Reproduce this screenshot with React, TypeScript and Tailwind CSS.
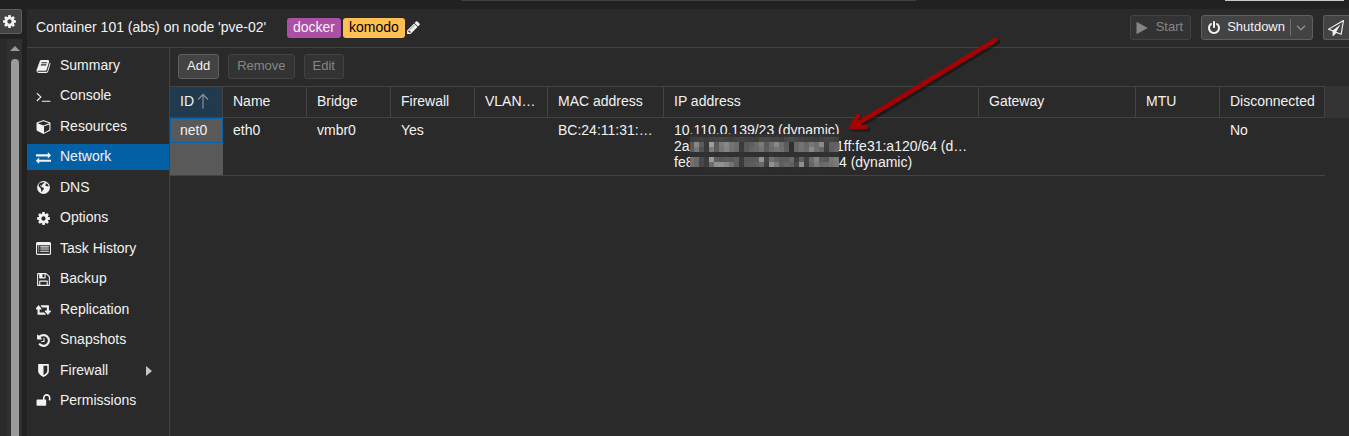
import type { ReactNode } from "react";

type IconName = keyof typeof PATHS;

// FontAwesome 4 outlines on the 1792 unit grid
const PATHS = {
  book: "M1703 478q40 57 18 129l-275 906q-19 64-76.5 107.5t-122.5 43.5h-923q-77 0-148.5-53.5t-99.5-131.5q-24-67-2-127 0-4 3-27t4-37q1-8-3-21.5t-3-19.5q2-11 8-21t16.5-23.5 16.5-23.5q23-38 45-91.5t30-91.5q3-10 .5-30t-.5-28q3-11 17-28t17-23q21-36 42-92t25-90q1-9-2.5-32t.5-28q4-13 22-30.5t22-22.5q19-26 42.5-84.5t27.5-96.5q1-8-3-25.5t-2-26.5q2-8 9-18t18-23 17-21q8-12 16.5-30.5t15-35 16-36 19.5-32 26.5-23.5 36-11.5 47.5 5.5l-1 3q38-9 51-9h761q74 0 114 56t18 130l-274 906q-36 119-71.5 153.5t-128.5 34.5h-869q-27 0-38 15-11 16-1 43 24 70 144 70h923q29 0 56-15.5t35-41.5l300-987q7-22 5-57 38 15 59 43zm-1064 2q-4 13 2 22.5t20 9.5h608q13 0 25.5-9.5t16.5-22.5l21-64q4-13-2-22.5t-20-9.5h-608q-13 0-25.5 9.5t-16.5 22.5zm-83 256q-4 13 2 22.5t20 9.5h608q13 0 25.5-9.5t16.5-22.5l21-64q4-13-2-22.5t-20-9.5h-608q-13 0-25.5 9.5t-16.5 22.5z",
  terminal: "M649 983l-466 466q-10 10-23 10t-23-10l-50-50q-10-10-10-23t10-23l393-393-393-393q-10-10-10-23t10-23l50-50q10-10 23-10t23 10l466 466q10 10 10 23t-10 23zm1079 457v64q0 14-9 23t-23 9h-960q-14 0-23-9t-9-23v-64q0-14 9-23t23-9h960q14 0 23 9t9 23z",
  cube: "M896 1629l640-349v-636l-640 233v752zm-64-865l698-254-698-254-698 254zm832-252v768q0 35-18 65t-49 47l-704 384q-28 16-61 16t-61-16l-704-384q-31-17-49-47t-18-65v-768q0-40 23-73t61-47l704-256q22-8 44-8t44 8l704 256q38 14 61 47t23 73z",
  exchange: "M1792 1184v192q0 13-9.5 22.5t-22.5 9.5h-1376v192q0 13-9.5 22.5t-22.5 9.5q-12 0-24-10l-319-320q-9-9-9-22 0-14 9-23l320-320q9-9 23-9 13 0 22.5 9.5t9.5 22.5v192h1376q13 0 22.5 9.5t9.5 22.5zm0-544q0 14-9 23l-320 320q-9 9-23 9-13 0-22.5-9.5t-9.5-22.5v-192h-1376q-13 0-22.5-9.5t-9.5-22.5v-192q0-13 9.5-22.5t22.5-9.5h1376v-192q0-14 9-23t23-9q12 0 24 10l319 319q9 9 9 23z",
  globe: "M896 128a768 768 0 1 0 0 1536a768 768 0 1 0 0-1536zM760 290l150-40 110 60-60 90-130 40-40 90-90 20 60 110-70 30-110-60-90 30 40 100 110 10 40 90 150 30 130 110-60 140-110 80-30 160-90 40-60-200-20-180-130-130-130-170-20-160 90-150 120-100zM1180 400l170 50 110 160 40 170-80 40-60-90-130 20-110-80 30-120z",
  cog: "M1152 896q0-106-75-181t-181-75-181 75-75 181 75 181 181 75 181-75 75-181zm512-109v222q0 12-8 23t-20 13l-185 28q-19 54-39 91 35 50 107 138 10 12 10 25t-9 23q-27 37-99 108t-94 71q-12 0-26-9l-138-108q-44 23-91 38-16 136-29 186-7 28-36 28h-222q-14 0-24.5-8.5t-11.5-21.5l-28-184q-49-16-90-37l-141 107q-10 9-25 9-14 0-25-11-126-114-165-168-7-10-7-23 0-12 8-23 15-21 51-66.5t54-70.5q-27-50-41-99l-183-27q-13-2-21-12.5t-8-23.5v-222q0-12 8-23t19-13l186-28q14-46 39-92-40-57-107-138-10-12-10-24 0-10 9-23 26-36 98.5-107.5t94.5-71.5q13 0 26 10l138 107q44-23 91-38 16-136 29-186 7-28 36-28h222q14 0 24.5 8.5t11.5 21.5l28 184q49 16 90 37l142-107q9-9 24-9 13 0 25 10 129 119 165 170 7 8 7 22 0 12-8 23-15 21-51 66.5t-54 70.5q26 50 41 98l183 28q13 2 21 12.5t8 23.5z",
  list: "M160 128h1472q66 0 113 47t47 113v1216q0 66-47 113t-113 47h-1472q-66 0-113-47t-47-113v-1216q0-66 47-113t113-47zM128 512v992q0 32 32 32h1472q32 0 32-32v-992zM256 640h128v128h-128zM256 896h128v128h-128zM256 1152h128v128h-128zM512 640h1024v128h-1024zM512 896h1024v128h-1024zM512 1152h1024v128h-1024z",
  save: "M512 1536h768v-384h-768v384zm896 0h128v-896q0-14-10-38.5t-20-34.5l-281-281q-10-10-34-20t-39-10v416q0 40-28 68t-68 28h-576q-40 0-68-28t-28-68v-416h-128v1280h128v-416q0-40 28-68t68-28h832q40 0 68 28t28 68v416zm-384-928v-320q0-13-9.5-22.5t-22.5-9.5h-192q-13 0-22.5 9.5t-9.5 22.5v320q0 13 9.5 22.5t22.5 9.5h192q13 0 22.5-9.5t9.5-22.5zm640 32v928q0 40-28 68t-68 28h-1344q-40 0-68-28t-28-68v-1344q0-40 28-68t68-28h928q40 0 88 20t76 48l280 280q28 28 48 76t20 88z",
  retweet: "M1216 1568q0 13-9.5 22.5t-22.5 9.5h-960q-8 0-13.5-2t-9-7-5.5-8-3-11.5-1-11.5v-600h-192q-26 0-45-19t-19-45q0-24 15-41l320-384q19-22 49-22t49 22l320 384q15 17 15 41 0 26-19 45t-45 19h-192v384h576q16 0 25 11l160 192q7 10 7 21zm640-416q0 24-15 41l-320 384q-20 23-49 23t-49-23l-320-384q-15-17-15-41 0-26 19-45t45-19h192v-384h-576q-16 0-25-12l-160-192q-7-9-7-20 0-13 9.5-22.5t22.5-9.5h960q8 0 13.5 2t9 7 5.5 8 3 11.5 1 11.5v600h192q26 0 45 19t19 45z",
  history: "M1664 896q0 156-61 298t-164 245-245 164-298 61q-172 0-327-72.5t-264-204.5q-7-10-6.5-22.5t8.5-20.5l137-138q10-9 25-9 16 2 23 12 73 95 179 147t225 52q104 0 198.5-40.5t163.5-109.5 109.5-163.5 40.5-198.5-40.5-198.5-109.5-163.5-163.5-109.5-198.5-40.5q-98 0-188 35.5t-160 101.5l137 138q31 30 14 69-17 40-59 40h-448q-26 0-45-19t-19-45v-448q0-42 40-59 39-17 69 14l130 129q107-101 244.5-156.5t284.5-55.5q156 0 298 61t245 164 164 245 61 298zm-640-288v448q0 14-9 23t-23 9h-320q-14 0-23-9t-9-23v-64q0-14 9-23t23-9h224v-352q0-14 9-23t23-9h64q14 0 23 9t9 23z",
  shield: "M1344 960v-640h-448v1137q119-63 213-137 235-184 235-360zm192-768v768q0 86-33.5 170.5t-83 150-118 127.5-126.5 103-121 77.5-89.5 49.5-42.5 20q-12 6-26 6t-26-6q-16-7-42.5-20t-89.5-49.5-121-77.5-126.5-103-118-127.5-83-150-33.5-170.5v-768q0-26 19-45t45-19h1152q26 0 45 19t19 45z",
  unlock: "M1728 576v256q0 26-19 45t-45 19h-64q-26 0-45-19t-19-45v-256q0-106-75-181t-181-75-181 75-75 181v192h96q40 0 68 28t28 68v576q0 40-28 68t-68 28h-960q-40 0-68-28t-28-68v-576q0-40 28-68t68-28h672v-192q0-185 131.5-316.5t316.5-131.5 316.5 131.5 131.5 316.5z",
  pencil: "M491 1536l91-91-235-235-91 91v107h128v128h107zm523-928q0-22-22-22-10 0-17 7l-542 542q-7 7-7 17 0 22 22 22 10 0 17-7l542-542q7-7 7-17zm-54-192l416 416-832 832h-416v-416zm683 96q0 53-37 90l-166 166-416-416 166-165q36-38 90-38 53 0 91 38l235 234q37 39 37 91z",
  play: "M1576 927l-1328 738q-23 13-39.5 3t-16.5-36v-1472q0-26 16.5-36t39.5 3l1328 738q23 13 23 31t-23 31z",
  power: "M1664 896q0 156-61 298t-164 245-245 164-298 61-298-61-245-164-164-245-61-298q0-182 80.5-343t226.5-270q43-32 95.5-25t83.5 50q32 42 24.5 94.5t-49.5 84.5q-98 74-151.5 181t-53.5 228q0 104 40.5 198.5t109.5 163.5 163.5 109.5 198.5 40.5 198.5-40.5 163.5-109.5 109.5-163.5 40.5-198.5q0-121-53.5-228t-151.5-181q-42-32-49.5-84.5t24.5-94.5q31-43 84-50t95 25q146 109 226.5 270t80.5 343zm-640-768v640q0 52-38 90t-90 38-90-38-38-90v-640q0-52 38-90t90-38 90 38 38 90z",
  plane: "M1764 11q33 24 27 64l-256 1536q-5 29-32 45-14 8-31 8-11 0-24-5l-527-215-298 327q-18 21-47 21-14 0-23-4-19-7-30-23.5t-11-36.5v-452l-472-193q-37-14-40-55-3-39 32-59l1664-960q35-21 68 2zm-342 1499l221-1323-1434 827 336 137 863-639-478 797z",
};

function Icon({ name, className = "size-[15px]" }: { name: IconName; className?: string }) {
  const box = name === "cube" ? "-64 0 1792 1792" : name === "retweet" ? "0 64 1856 1792" : "0 0 1792 1792";
  return (
    <svg viewBox={box} className={`shrink-0 ${className}`} fill="currentColor" fillRule={name === "list" || name === "globe" ? "evenodd" : "nonzero"} aria-hidden="true">
      <path d={PATHS[name]} />
    </svg>
  );
}

const NAV: { label: string; icon: IconName }[] = [
  { label: "Summary", icon: "book" },
  { label: "Console", icon: "terminal" },
  { label: "Resources", icon: "cube" },
  { label: "Network", icon: "exchange" },
  { label: "DNS", icon: "globe" },
  { label: "Options", icon: "cog" },
  { label: "Task History", icon: "list" },
  { label: "Backup", icon: "save" },
  { label: "Replication", icon: "retweet" },
  { label: "Snapshots", icon: "history" },
  { label: "Firewall", icon: "shield" },
  { label: "Permissions", icon: "unlock" },
];

const COLUMNS = [
  { label: "Name", width: "w-[84px]" },
  { label: "Bridge", width: "w-[84px]" },
  { label: "Firewall", width: "w-[84px]" },
  { label: "VLAN…", width: "w-[73px]" },
  { label: "MAC address", width: "w-[116px]" },
  { label: "IP address", width: "w-[315px]" },
  { label: "Gateway", width: "w-[157px]" },
  { label: "MTU", width: "w-[84px]" },
  { label: "Disconnected", width: "w-[105px]" },
];

// grey level of each block, one byte per block
const MOSAIC = [
  { y: 0, h: 3, row: "2f2f303032313232323131302f303134333231343534333230323433323130" },
  { y: 3, h: 5, row: "3b3f403c4244464240444441403c484a464440484c484440403c424644403c" },
  { y: 8, h: 5, row: "58885c3a9c5a7a88746e3a585e6a7c5a70886c5c30667466786e8a40606060" },
  { y: 13, h: 5, row: "5a76523a7c5c7684726a3c5a6468745c6c74705e3068726a8a70663e5e666a" },
  { y: 18, h: 5, row: "302f3032302f303130303230302f3030323030302f30303230303030302f30" },
  { y: 23, h: 5, row: "726a483a9a5e585c5a603c58585c944670645c5e6a3e60406c845c58767c80" },
  { y: 28, h: 5, row: "7068463c6c909288745e3a5a5c606a40907a5e6660488e3e667a6a6c72787c" },
  { y: 33, h: 6, row: "2b2c2b2c2d2c2d2c2c2b2c2c2b2c2d2c2b2c2c2b2c2d2c2b2c2b2c2b2c2b2b" },
];

function Mosaic() {
  return (
    <svg className="absolute left-4 top-3 h-[39px] w-[149px]" viewBox="0 0 149 39" shapeRendering="crispEdges" aria-hidden="true">
      {MOSAIC.map(({ y, h, row }) =>
        (row.match(/../g) ?? []).map((v, i) => (
          <rect key={`${y}-${i}`} x={i * 5 - 1} y={y} width={5} height={h} fill={`#${v}${v}${v}`} />
        )),
      )}
    </svg>
  );
}

function ToolButton({ children, disabled }: { children: ReactNode; disabled?: boolean }) {
  return (
    <button
      type="button"
      disabled={disabled}
      className="flex h-[25px] items-center rounded-[3px] border border-[#5f5f5f] bg-[#434343] px-2 pb-px text-[13px] leading-4 text-[#f2f2f2] disabled:border-[#434343] disabled:bg-[#333333] disabled:text-[#868686]"
    >
      {children}
    </button>
  );
}

function TreeStrip() {
  return (
    <aside className="flex w-[27px] shrink-0 flex-col pr-[5px]">
      <button
        type="button"
        aria-label="Tree settings"
        className="flex h-[25px] items-center rounded-r-[3px] border border-l-0 border-[#5f5f5f] bg-[#434343] pl-[2px] text-[#f2f2f2]"
      >
        <Icon name="cog" />
      </button>
      <div className="mt-[5px] flex flex-1 justify-end bg-[#2a2a2a]">
        <div className="flex w-[15px] flex-col items-center bg-[#303030] pt-[7px]">
          <svg viewBox="0 0 10 5" className="h-[5px] w-[10px] fill-[#9b9b9b]" aria-hidden="true">
            <path d="M0 5 5 0l5 5z" />
          </svg>
          <div className="mt-2 w-2 flex-1 rounded-t-full bg-[#9b9b9b]" />
        </div>
      </div>
    </aside>
  );
}

function TitleBar() {
  return (
    <header className="flex h-[39px] items-center border-b border-[#434343] pb-px pl-[9px]">
      <h1 className="w-[251px] whitespace-nowrap pb-px">Container 101 (abs) on node 'pve-02'</h1>
      <span className="flex h-5 items-center rounded-[3px] bg-[#ad4fa6] px-[6px] pb-px">docker</span>
      <span className="ml-[2px] flex h-5 items-center rounded-[3px] bg-[#ffbf52] px-[6px] pb-px text-black">komodo</span>
      <button type="button" aria-label="Edit tags" className="ml-px">
        <Icon name="pencil" />
      </button>
      <div className="ml-auto flex gap-[10px]">
        <button
          type="button"
          disabled
          className="flex h-[25px] items-center gap-[7px] rounded-[3px] border border-[#434343] bg-[#333333] pl-1 pr-[7px] text-[13px] leading-4 text-[#868686]"
        >
          <Icon name="play" className="size-[14px]" />
          <span className="pb-px">Start</span>
        </button>
        <button
          type="button"
          className="flex h-[25px] items-center rounded-[3px] border border-[#5f5f5f] bg-[#434343] pl-[5px] pr-[6px] text-[13px] leading-4"
        >
          <Icon name="power" className="mr-[6px] size-[14px]" />
          <span className="pb-px">Shutdown</span>
          <span className="ml-[5px] h-[17px] w-px bg-[#6e6e6e]" />
          <svg viewBox="0 0 10 6" className="ml-[5px] h-[6px] w-[10px] fill-none stroke-[#8c8c8c] stroke-[1.5]" aria-hidden="true">
            <path d="M1 .8 5 4.8 9 .8" />
          </svg>
        </button>
        <button
          type="button"
          aria-label="Migrate"
          className="flex h-[25px] w-[26px] items-center rounded-l-[3px] border border-r-0 border-[#5f5f5f] bg-[#434343] pl-1"
        >
          <Icon name="plane" className="size-4" />
        </button>
      </div>
    </header>
  );
}

function SideNav() {
  return (
    <nav className="w-[143px] shrink-0 border-r border-[#434343] pt-[5px]">
      <ul className="flex h-[361px] flex-col justify-between">
        {NAV.map(({ label, icon }) => (
          <li key={label}>
            <a
              href="#"
              aria-current={label === "Network" ? "page" : undefined}
              className="flex h-[26px] items-center gap-[9px] pl-[9px] pr-[17px] aria-[current=page]:bg-[#0460a5]"
            >
              <Icon name={icon} />
              <span className="pb-[2px]">{label}</span>
              {label === "Firewall" && (
                <svg viewBox="0 0 6 10" className="ml-auto h-[10px] w-[6px] fill-[#c4c4c4]" aria-hidden="true">
                  <path d="M0 0 6 5 0 10z" />
                </svg>
              )}
            </a>
          </li>
        ))}
      </ul>
    </nav>
  );
}

function NetworkTable() {
  return (
    <table className="w-full table-fixed border-separate border-spacing-0 text-left">
      <thead>
        <tr className="h-8">
          <th className="w-[53px] border-y border-r border-[#434343] bg-[#223a4e] p-0 pb-[2px] pl-[10px] font-normal">
            <span className="flex items-center gap-[3px]">
              ID
              <svg viewBox="0 0 12 16" className="h-4 w-3 fill-none stroke-[#7f8d98] stroke-[1.3]" aria-hidden="true">
                <path d="M6 15.500V1.500M1 6.500l5-5 5 5" />
              </svg>
            </span>
          </th>
          {COLUMNS.map(({ label, width }) => (
            <th key={label} className={`${width} truncate border-y border-r border-[#434343] p-0 pb-[2px] pl-[10px] pr-1 font-normal`}>
              {label}
            </th>
          ))}
          <th className="bg-[#343434] p-0" aria-hidden="true" />
        </tr>
      </thead>
      <tbody>
        <tr className="align-top leading-4 [&>td:not(:last-child)]:border-b [&>td]:border-[#434343]">
          <td className="bg-[#595959] p-0">
            <div className="border border-[#0a63a8] py-[3px] pb-1 pl-[9px]">net0</div>
          </td>
          <td className="py-1 pl-[10px]">eth0</td>
          <td className="py-1 pl-[10px]">vmbr0</td>
          <td className="py-1 pl-[10px]">Yes</td>
          <td />
          <td className="py-1 pl-[10px]">BC:24:11:31:…</td>
          <td className="py-1 pb-[5px] pl-[10px]">
            <div className="relative whitespace-nowrap">
              <div>10.110.0.139/23 (dynamic)</div>
              <div className="flex">
                <span className="w-[162px]">2a</span>1ff:fe31:a120/64 (d…
              </div>
              <div className="flex">
                <span className="w-[165px]">fe8</span>4 (dynamic)
              </div>
              <Mosaic />
            </div>
          </td>
          <td />
          <td />
          <td className="py-1 pl-[10px]">No</td>
          <td />
        </tr>
      </tbody>
    </table>
  );
}

export default function App() {
  return (
    <div className="relative flex min-h-screen flex-col overflow-hidden bg-[#212121] font-['Liberation_Sans',Arial,sans-serif] text-[14px] leading-4 text-[#f2f2f2]">
      <div className="flex h-[9px] items-start justify-between pl-[461px] pr-[5px]">
        <div className="h-px w-[455px] bg-[#3f3f3f]" />
        <div className="h-px w-[119px] bg-[#c8c8c8]" />
      </div>
      <div className="flex flex-1">
        <TreeStrip />
        <main className="flex min-w-0 flex-1 flex-col bg-[#2a2a2a]">
          <TitleBar />
          <div className="flex flex-1">
            <SideNav />
            <section className="min-w-0 flex-1">
              <div className="flex h-[38px] items-center gap-[9px] pb-[2px] pl-2">
                <ToolButton>Add</ToolButton>
                <ToolButton disabled>Remove</ToolButton>
                <ToolButton disabled>Edit</ToolButton>
              </div>
              <NetworkTable />
            </section>
          </div>
        </main>
      </div>

      <svg className="absolute left-[840px] top-[30px] h-[110px] w-[170px]" viewBox="0 0 170 110" fill="none" aria-hidden="true">
        <g strokeWidth="4.500" strokeLinecap="round" strokeLinejoin="round">
          <path d="M158 12 15 99M20 88 13 99.500 28 99.500" stroke="#000" opacity=".35" />
          <path d="M155.500 10 12 97M18 86 11.500 97.500 26 97" stroke="#a50303" />
        </g>
      </svg>
    </div>
  );
}
